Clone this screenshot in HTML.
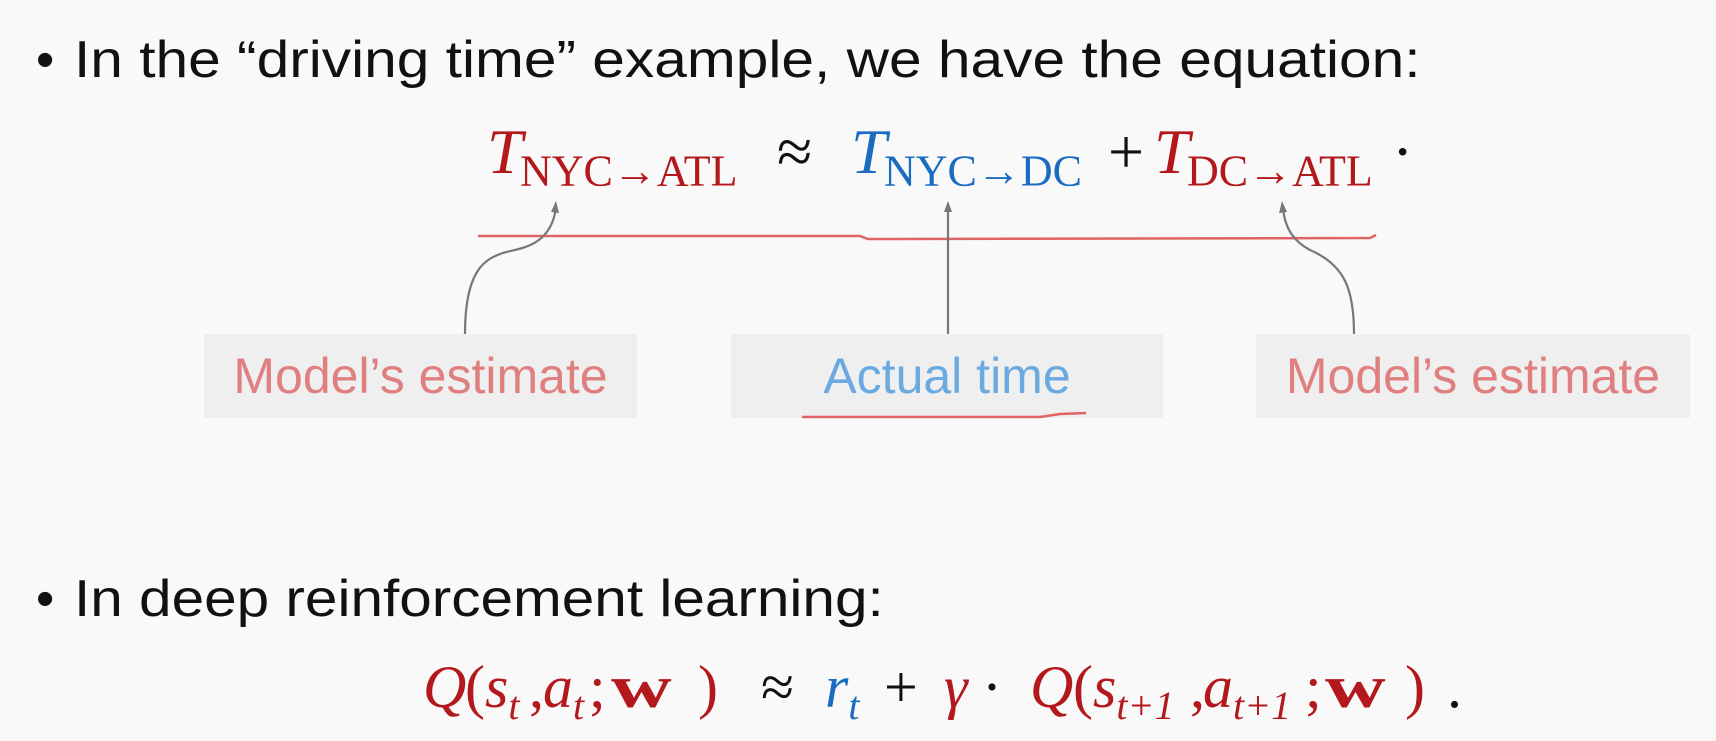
<!DOCTYPE html>
<html><head><meta charset="utf-8"><style>
html,body{margin:0;padding:0}
body{width:1716px;height:738px;background:#f9f9f9;position:relative;overflow:hidden;font-family:"Liberation Sans",sans-serif}
.a{position:absolute;white-space:nowrap}
.b{font-size:52px;line-height:60px;color:#111;transform-origin:0 0}
.m{font-family:"Liberation Serif",serif}
.i{font-style:italic}
.r{color:#b3191c}.bl{color:#1a6cc0}.k{color:#111}
.box{position:absolute;top:334px;height:84px;background:#efefef;font-size:50px;line-height:84px;text-align:center}
.e1{position:absolute;top:112px;font-size:64px;line-height:80px}
.e1 sub{font-size:44px;vertical-align:-0.28em}
.e2{position:absolute;top:652px;font-size:60px;line-height:70px}
.e2 sub{font-size:40px;vertical-align:-0.3em;font-style:italic}
.w{display:inline-block;transform:scaleX(1.4);transform-origin:0 0}
</style></head><body>
<div class="a b" style="left:36px;top:30px">•</div>
<div class="a b" style="left:74px;top:30px;transform:scaleX(1.128)">In the “driving time” example, we have the equation:</div>

<div class="m">
<span class="e1 r i" style="left:487px">T</span><span class="e1 r" style="left:520px"><sub>NYC→ATL</sub></span>
<span class="e1 k" style="left:777px">≈</span>
<span class="e1 bl i" style="left:851px">T</span><span class="e1 bl" style="left:884px"><sub>NYC→DC</sub></span>
<span class="e1 k" style="left:1108px">+</span>
<span class="e1 r i" style="left:1154px">T</span><span class="e1 r" style="left:1187px"><sub>DC→ATL</sub></span>
<span class="e1 k" style="left:1392px">·</span>
</div>

<div class="box" style="left:204px;width:433px;color:#e07f7f">Model’s estimate</div>
<div class="box" style="left:731px;width:432px;color:#6aaae0">Actual time</div>
<div class="box" style="left:1256px;width:434px;color:#e07f7f">Model’s estimate</div>

<svg class="a" style="left:0;top:0" width="1716" height="738">
<path d="M478 236 L860 236 L868 239 L1370 238 L1376 235" stroke="#e06464" stroke-width="2.5" fill="none"/>
<path d="M465 334 C465 270 485 260 500 254 C515 248 550 250 556 208" stroke="#777" stroke-width="2.2" fill="none"/>
<path d="M551 212 L556 201 L559 213 Z" fill="#777"/>
<path d="M948 334 L948 208" stroke="#777" stroke-width="2.2" fill="none"/>
<path d="M944 212 L948 201 L952 212 Z" fill="#777"/>
<path d="M1354 334 C1354 290 1345 265 1310 250 C1295 242 1285 230 1283 208" stroke="#777" stroke-width="2.2" fill="none"/>
<path d="M1279 213 L1282 201 L1287 212 Z" fill="#777"/>
<path d="M802 417 L1040 417 L1060 414 L1086 413" stroke="#e06464" stroke-width="2.5" fill="none"/>
</svg>

<div class="a b" style="left:36px;top:569px">•</div>
<div class="a b" style="left:74px;top:569px;transform:scaleX(1.125)">In deep reinforcement learning:</div>

<div class="m">
<span class="e2 r i" style="left:423px">Q</span>
<span class="e2 r" style="left:465px">(</span>
<span class="e2 r i" style="left:485px">s<sub>t</sub></span>
<span class="e2 r" style="left:529px">,</span>
<span class="e2 r i" style="left:543px">a<sub>t</sub></span>
<span class="e2 r" style="left:589px">;</span>
<span class="e2 r" style="left:611px"><b class="w">w</b></span>
<span class="e2 r" style="left:698px">)</span>
<span class="e2 k" style="left:761px">≈</span>
<span class="e2 bl i" style="left:825px">r<sub>t</sub></span>
<span class="e2 k" style="left:884px">+</span>
<span class="e2 r i" style="left:944px">γ</span>
<span class="e2 k" style="left:982px">·</span>
<span class="e2 r i" style="left:1030px">Q</span>
<span class="e2 r" style="left:1073px">(</span>
<span class="e2 r i" style="left:1093px">s<sub>t+1</sub></span>
<span class="e2 r" style="left:1190px">,</span>
<span class="e2 r i" style="left:1203px">a<sub>t+1</sub></span>
<span class="e2 r" style="left:1305px">;</span>
<span class="e2 r" style="left:1325px"><b class="w">w</b></span>
<span class="e2 r" style="left:1405px">)</span>
<span class="e2 k" style="left:1447px">.</span>
</div>
</body></html>
